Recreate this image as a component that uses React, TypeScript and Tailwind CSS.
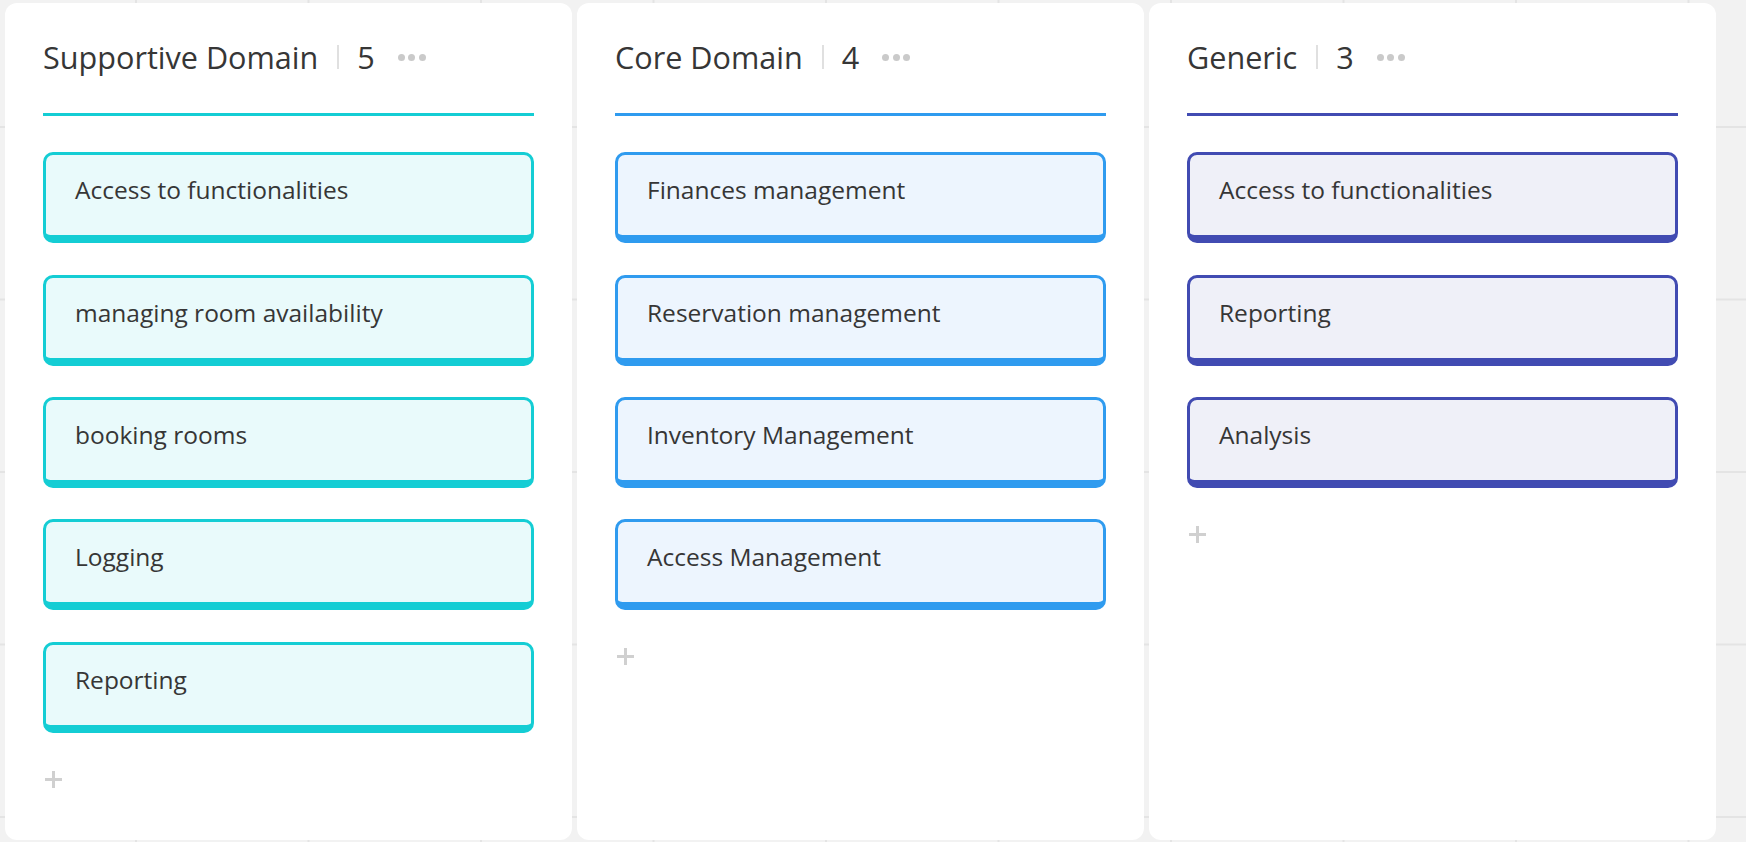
import React from "react";

type Col = {
  title: string;
  items: string[];
  line: string;
  card: string;
};

const columns: Col[] = [
  {
    title: "Supportive Domain",
    items: [
      "Access to functionalities",
      "managing room availability",
      "booking rooms",
      "Logging",
      "Reporting",
    ],
    line: "bg-[#14cdd4]",
    card: "border-[#14cdd4] bg-[#e9fafb]",
  },
  {
    title: "Core Domain",
    items: [
      "Finances management",
      "Reservation management",
      "Inventory Management",
      "Access Management",
    ],
    line: "bg-[#2f9bef]",
    card: "border-[#2f9bef] bg-[#edf5fe]",
  },
  {
    title: "Generic",
    items: ["Access to functionalities", "Reporting", "Analysis"],
    line: "bg-[#414bb2]",
    card: "border-[#414bb2] bg-[#eff0f8]",
  },
];

function Column({ col }: { col: Col }) {
  return (
    <div className="w-[567px] h-[837px] shrink-0 bg-white rounded-[12px] px-[38px] pt-[34px] flex flex-col">
      <div className="flex items-center text-[#363636]">
        <span className="text-[30.6px] leading-[40px] whitespace-nowrap">{col.title}</span>
        <span className="ml-[19px] w-[2px] h-[24px] bg-[#e0e0e0]" />
        <span className="ml-[18px] text-[30.6px] leading-[40px]">{col.items.length}</span>
        <span className="ml-[23px] flex items-center gap-[3.5px]">
          <span className="w-[7px] h-[7px] rounded-full bg-[#cacaca]" />
          <span className="w-[7px] h-[7px] rounded-full bg-[#cacaca]" />
          <span className="w-[7px] h-[7px] rounded-full bg-[#cacaca]" />
        </span>
      </div>
      <div className={`mt-[35.6px] h-[3px] w-full ${col.line}`} />
      <div className="mt-[36.7px] flex flex-col gap-[31.4px]">
        {col.items.map((it, i) => (
          <div
            key={i}
            className={`h-[91px] rounded-[10px] border-[3px] border-b-[8px] pl-[29px] pt-[19px] ${col.card}`}
          >
            <span className="block text-[24.5px] leading-[32px] text-[#363636]">{it}</span>
          </div>
        ))}
      </div>
      <div className="mt-[37px] pl-[1px]">
        <svg width="19" height="19" viewBox="0 0 19 19">
          <path d="M9.5 1V18M1 9.5H18" stroke="#d0d0d0" strokeWidth="3" />
        </svg>
      </div>
    </div>
  );
}

export default function App() {
  return (
    <div
      className="w-full h-[842px] overflow-hidden bg-[#f2f2f2] bg-[linear-gradient(to_right,#e4e4e4_2px,transparent_2px),linear-gradient(to_bottom,#e4e4e4_2px,transparent_2px)] bg-[size:172.5px_172.5px] bg-[position:135px_126px] flex gap-[5px] pl-[5px] pt-[3px]"
      style={{ fontFamily: '"Open Sans", "Noto Sans", sans-serif' }}
    >
      {columns.map((c, i) => (
        <Column key={i} col={c} />
      ))}
    </div>
  );
}
